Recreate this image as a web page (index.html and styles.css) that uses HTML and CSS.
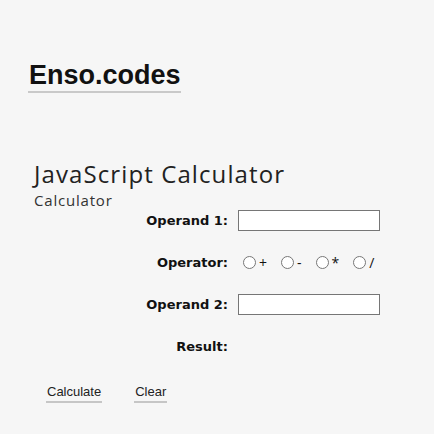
FILE: index.html
```html
<!DOCTYPE html>
<html>
<head>
<meta charset="utf-8">
<link rel="stylesheet" href="styles.css">
</head>
<body>
<header class="site-header">
  <h1 class="logo">Enso.codes</h1>
</header>
<main class="app">
  <h2 class="app-title">JavaScript Calculator</h2>
  <p class="app-sub">Calculator</p>
  <form class="calc">
    <label class="calc-label" for="op1">Operand 1:</label>
    <input class="calc-input" id="op1" type="text">
    <span class="calc-label">Operator:</span>
    <div class="ops">
      <label class="op"><input type="radio" name="op" class="radio">+</label>
      <label class="op"><input type="radio" name="op" class="radio">-</label>
      <label class="op"><input type="radio" name="op" class="radio">*</label>
      <label class="op"><input type="radio" name="op" class="radio">/</label>
    </div>
    <label class="calc-label" for="op2">Operand 2:</label>
    <input class="calc-input" id="op2" type="text">
    <span class="calc-label">Result:</span>
    <span class="result"></span>
  </form>
  <div class="actions">
    <button type="button" class="btn">Calculate</button>
    <button type="button" class="btn">Clear</button>
  </div>
</main>
</body>
</html>
```
FILE: styles.css
```css
html, body {
  margin: 0;
  padding: 0;
  background: #f6f6f6;
}
body {
  font-family: "Liberation Sans", Arial, sans-serif;
  color: #111;
}
.site-header {
  padding: 60px 0 0 28px;
}
.logo {
  display: inline-block;
  margin: 0;
  font-size: 27px;
  font-weight: bold;
  line-height: 31px;
  padding-left: 1px;
  border-bottom: 2px solid #c9c9c9;
  color: #111;
}
.app {
  padding: 66px 0 0 34px;
}
.app-title {
  margin: 0;
  font-family: "Open Sans", sans-serif;
  font-weight: 400;
  font-size: 24px;
  line-height: 30px;
  letter-spacing: 1.1px;
  color: #222;
}
.app-sub {
  margin: 3px 0 0;
  font-family: "Open Sans", sans-serif;
  font-size: 15px;
  line-height: 17px;
  letter-spacing: 0.8px;
  color: #333;
}
.calc {
  display: grid;
  grid-template-columns: 194px auto;
  column-gap: 10px;
  row-gap: 21px;
  align-items: center;
  grid-auto-rows: 21px;
  margin-top: 1px;
}
.calc-label {
  text-align: right;
  font-family: "DejaVu Sans", Verdana, sans-serif;
  font-weight: bold;
  font-size: 13px;
  color: #111;
}
.calc-input {
  width: 142px;
  height: 21px;
  box-sizing: border-box;
  margin: 0;
  border: 1px solid #767676;
  background: #fff;
  padding: 1px 2px;
}
.ops {
  display: flex;
  align-items: center;
  gap: 9px;
  font-family: "Open Sans", sans-serif;
  font-size: 14px;
  color: #111;
}
.op {
  display: flex;
  align-items: center;
}
.radio {
  margin: 0 3px 0 5px;
  width: 13px;
  height: 13px;
}
.actions {
  display: flex;
  gap: 32px;
  margin-top: 27px;
  padding-left: 12px;
}
.btn {
  background: none;
  border: none;
  border-bottom: 2px solid #c6c6c6;
  padding: 0 1px 2px;
  font-family: "Liberation Sans", Arial, sans-serif;
  font-size: 13px;
  color: #222;
}
```
